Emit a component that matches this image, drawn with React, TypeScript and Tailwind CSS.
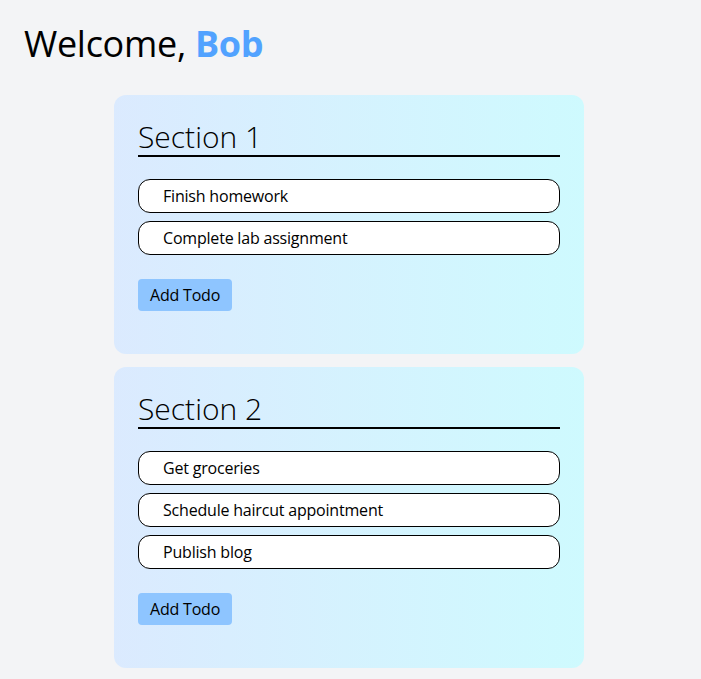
import React from "react";

const sections = [
  { title: "Section 1", todos: ["Finish homework", "Complete lab assignment"] },
  { title: "Section 2", todos: ["Get groceries", "Schedule haircut appointment", "Publish blog"] },
];

export default function App() {
  return (
    <div
      className="min-h-screen bg-gray-100 p-6 text-black"
      style={{ fontFamily: '"Open Sans", "Noto Sans", sans-serif' }}
    >
      <h1 className="text-4xl leading-10 tracking-[-0.3px]">
        Welcome, <span className="font-bold text-blue-400">Bob</span>
      </h1>
      <div className="mt-[31px] ml-[90px] flex w-[470px] flex-col gap-[13px]">
        {sections.map((s) => (
          <div
            key={s.title}
            className="rounded-xl bg-gradient-to-r from-blue-100 to-cyan-100 px-6 pt-6 pb-[43px]"
          >
            <h2 className="border-b-2 border-black text-3xl font-light leading-9">{s.title}</h2>
            <ul className="mt-[22px] flex flex-col gap-2">
              {s.todos.map((t) => (
                <li
                  key={t}
                  className="rounded-xl border border-black bg-white px-6 py-1 text-base leading-6 tracking-[-0.2px]"
                >
                  {t}
                </li>
              ))}
            </ul>
            <button className="mt-6 rounded-sm bg-blue-300 px-3 py-1 text-base leading-6 tracking-[-0.2px]">
              Add Todo
            </button>
          </div>
        ))}
      </div>
    </div>
  );
}
